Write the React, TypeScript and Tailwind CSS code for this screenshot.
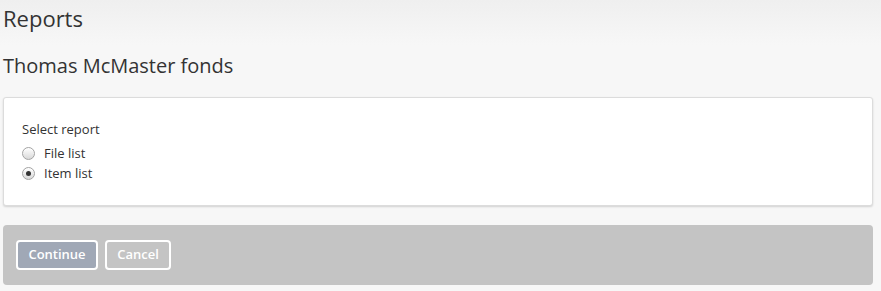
import { useState } from "react";

const reports = [
  { id: "fileList", label: "File list" },
  { id: "itemList", label: "Item list" },
];

function Radio({ checked }: { checked: boolean }) {
  return (
    <span className="flex h-[13px] w-[13px] shrink-0 items-center justify-center rounded-full border border-[#a3a3a3] bg-gradient-to-b from-white to-[#d9d9d9] shadow-[inset_0_1px_0_#fff]">
      {checked && <span className="h-[5px] w-[5px] rounded-full bg-[#333]" />}
    </span>
  );
}

export default function App() {
  const [selected, setSelected] = useState("itemList");

  return (
    <div className="min-h-screen bg-[#f7f7f7] bg-[linear-gradient(to_bottom,#efefef,#f7f7f7_45px)] font-['Open_Sans',sans-serif] text-[#333]">
      <div className="w-[873px] pl-[3px] pt-[3px]">
        <h1 className="text-[22px] leading-[30px]">Reports</h1>
        <h2 className="mt-[19px] text-[20px] leading-[28px]">Thomas McMaster fonds</h2>

        <div className="mt-[17px] rounded-[3px] border border-[#dcdcdc] bg-white pb-[22px] pl-[18px] pt-[21px] shadow-[0_1px_2px_rgba(0,0,0,0.15)]">
          <div className="mb-[4px] text-[13px] leading-[20px]">Select report</div>
          {reports.map((r) => (
            <label
              key={r.id}
              className="flex cursor-pointer items-center gap-[9px] text-[13px] leading-[20px]"
              onClick={() => setSelected(r.id)}
            >
              <Radio checked={selected === r.id} />
              {r.label}
            </label>
          ))}
        </div>

        <div className="mt-[19px] flex gap-[7px] rounded-[4px] bg-[#c4c4c4] px-[13px] py-[15px]">
          <button className="h-[30px] w-[82px] rounded-[4px] border-2 border-white bg-[#a0a8b6] text-[13px] font-semibold text-white">
            Continue
          </button>
          <button className="h-[30px] w-[66px] rounded-[4px] border-2 border-white text-[13px] font-semibold text-white">
            Cancel
          </button>
        </div>
      </div>
    </div>
  );
}
